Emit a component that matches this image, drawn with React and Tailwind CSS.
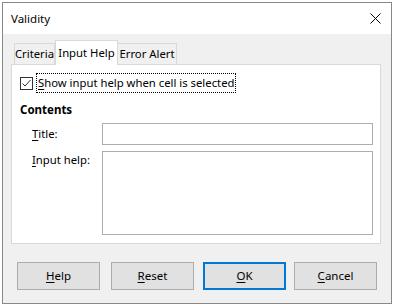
import React from 'react';

const font = { fontFamily: '"Noto Sans", "Open Sans", Arial, sans-serif' };

function Mn({ k, rest }) {
    return (
        <span>
            <span className="underline underline-offset-[2px]">{k}</span>
            {rest}
        </span>
    );
}

function Btn({ k, rest, primary }) {
    return (
        <button
            className={
                primary
                    ? 'w-[83px] h-[28px] bg-[#e1e1e1] border-2 border-[#0078d7] text-[11.5px] text-black'
                    : 'w-[83px] h-[28px] bg-[#e1e1e1] border border-[#adadad] text-[11.5px] text-black'
            }
        >
            <Mn k={k} rest={rest} />
        </button>
    );
}

export default function App() {
    return (
        <div className="w-[394px] h-[307px] bg-white overflow-hidden pt-[2px] pl-[2px]" style={font}>
            <div className="w-[390px] h-[302px] border border-[#888888] flex flex-col bg-[#f0f0f0]">
                {/* title bar */}
                <div className="h-[31px] bg-white flex items-center justify-between pl-[8px] pr-[10px]">
                    <span className="text-[11.5px] text-black">Validity</span>
                    <svg width="11" height="11" viewBox="0 0 11 11">
                        <path d="M0.5 0.5 L10.5 10.5 M10.5 0.5 L0.5 10.5" stroke="#000" strokeWidth="1" />
                    </svg>
                </div>

                <div className="flex-1 px-[8px] pt-[6px]">
                    {/* tabs */}
                    <div className="flex items-end pl-[3px] h-[24px] text-[11.3px] text-black">
                        <div className="h-[21px] w-[41px] border border-b-0 border-[#d9d9d9] bg-[#f0f0f0] flex items-center justify-center">Criteria</div>
                        <div className="h-[25px] w-[63px] border border-b-0 border-[#d9d9d9] bg-white flex items-center justify-center -mb-px relative z-10">Input Help</div>
                        <div className="h-[21px] w-[59px] border border-b-0 border-l-0 border-[#d9d9d9] bg-[#f0f0f0] flex items-center justify-center">Error Alert</div>
                    </div>
                    {/* panel */}
                    <div className="w-[370px] h-[180px] bg-white border border-[#d9d9d9] pl-[8px] pr-[7px] pt-[8px]">
                        <div className="flex items-center gap-[3px]">
                            <div className="w-[13px] h-[13px] border border-[#333] flex items-center justify-center">
                                <svg width="11" height="11" viewBox="0 0 11 11">
                                    <path d="M1.5 5.5 L4 8 L9.5 2" stroke="#333" strokeWidth="1" fill="none" />
                                </svg>
                            </div>
                            <span className="text-[11.3px] text-black border border-dotted border-black px-px leading-[18px]">
                                <Mn k="S" rest="how input help when cell is selected" />
                            </span>
                        </div>
                        <div className="mt-[8px] text-[11.5px] font-bold text-black">Contents</div>
                        <div className="flex items-center mt-[5px]">
                            <div className="w-[82px] pl-[12px] text-[11.3px] text-black"><Mn k="T" rest="itle:" /></div>
                            <div className="w-[271px] h-[22px] border border-[#adadad] bg-white"></div>
                        </div>
                        <div className="flex items-start mt-[6px]">
                            <div className="w-[82px] pl-[12px] text-[11.3px] text-black pt-[1px]"><Mn k="I" rest="nput help:" /></div>
                            <div className="w-[271px] h-[84px] border border-[#adadad] bg-white"></div>
                        </div>
                    </div>
                    {/* buttons */}
                    <div className="flex items-center pl-[6px] mt-[18px]">
                        <Btn k="H" rest="elp" />
                        <div className="w-[11px]"></div>
                        <Btn k="R" rest="eset" />
                        <div className="w-[9px]"></div>
                        <Btn k="O" rest="K" primary />
                        <div className="w-[8px]"></div>
                        <Btn k="C" rest="ancel" />
                    </div>
                </div>
            </div>
        </div>
    );
}
